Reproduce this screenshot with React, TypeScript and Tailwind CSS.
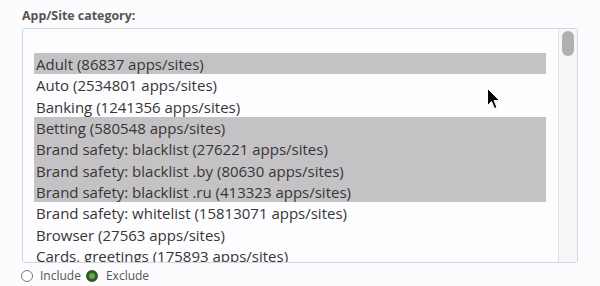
import React from 'react';

const CATEGORIES = [
  { name: 'Adult', count: 86837, selected: true },
  { name: 'Auto', count: 2534801, selected: false },
  { name: 'Banking', count: 1241356, selected: false },
  { name: 'Betting', count: 580548, selected: true },
  { name: 'Brand safety: blacklist', count: 276221, selected: true },
  { name: 'Brand safety: blacklist .by', count: 80630, selected: true },
  { name: 'Brand safety: blacklist .ru', count: 413323, selected: true },
  { name: 'Brand safety: whitelist', count: 15813071, selected: false },
  { name: 'Browser', count: 27563, selected: false },
  { name: 'Cards, greetings', count: 175893, selected: false },
  { name: 'Communication', count: 312044, selected: false },
];

const Cursor: React.FC = () => (
  <svg
    className="absolute left-[486px] top-[87px] pointer-events-none"
    width="16"
    height="24"
    viewBox="0 0 16 24"
  >
    <path
      d="M1.5 1.5 L1.5 18.5 L5.5 14.5 L8.5 21.5 L11 20.5 L8 13.5 L13.5 13.5 Z"
      fill="#000"
      stroke="#fff"
      strokeWidth="1"
      strokeLinejoin="round"
    />
  </svg>
);

const App: React.FC = () => {
  return (
    <div className="relative w-[600px] h-[286px] overflow-hidden bg-[#fcfbfd] pl-[22px] pt-[7px] font-['Open_Sans','Noto_Sans',sans-serif]">
      <div className="text-[12.4px] font-bold text-[#555] leading-[18px]">App/Site category:</div>

      {/* Multi-select box */}
      <div className="mt-[3px] flex w-[556px] h-[235px] rounded-[3px] border border-[#cfd8dd] bg-[#fdfcfe] overflow-hidden">
        <div className="flex-1 overflow-hidden pt-[24px] pl-[11px] pr-[12px]">
          {CATEGORIES.map((c) => (
            <div
              key={c.name}
              className={`h-[21.33px] pl-[2px] text-[15px] leading-[22px] text-[#363636] whitespace-nowrap ${
                c.selected ? 'bg-[#c4c2c5]' : ''
              }`}
            >
              {c.name} ({c.count} apps/sites)
            </div>
          ))}
        </div>

        {/* Scrollbar */}
        <div className="w-[19px] shrink-0 border-l border-[#e3e2e5] bg-[#f6f5f7] pt-[2px] flex justify-center">
          <div className="w-[12px] h-[25px] rounded-full bg-[#b1b0b2]" />
        </div>
      </div>

      {/* Include / Exclude */}
      <div className="mt-[5px] -ml-[1px] flex items-center text-[12px] text-[#555] leading-[16px]">
        <span className="w-[12px] h-[12px] rounded-full border border-[#777] bg-white" />
        <span className="ml-[7px]">Include</span>
        <span className="ml-[5px] w-[12px] h-[12px] rounded-full border-[3px] border-[#2f5a28] bg-[#5fae45]" />
        <span className="ml-[8px]">Exclude</span>
      </div>

      <Cursor />
    </div>
  );
};

export default App;
